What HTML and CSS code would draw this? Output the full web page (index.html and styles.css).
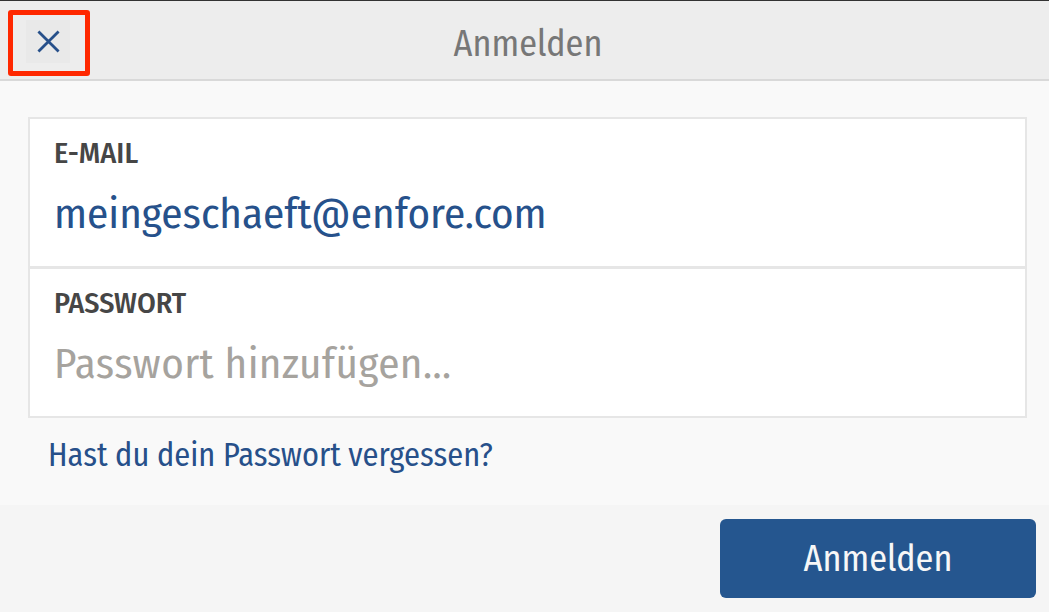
FILE: index.html
```html
<!DOCTYPE html>
<html lang="de">
<head>
<meta charset="utf-8">
<title>Anmelden</title>
<link rel="stylesheet" href="styles.css">
</head>
<body>
<div class="app">
  <header class="topbar">
    <button class="close" aria-label="Schließen">
      <svg class="close-icon" viewBox="0 0 24 24" width="24" height="24" aria-hidden="true">
        <path d="M1.5 1.5 L22.5 22.5 M22.5 1.5 L1.5 22.5" />
      </svg>
    </button>
    <h1 class="title">Anmelden</h1>
    <span class="spacer"></span>
  </header>
  <div class="highlight"></div>
  <main class="content">
    <div class="field">
      <div class="label">E-MAIL</div>
      <div class="value">meingeschaeft@enfore.com</div>
    </div>
    <div class="field field-second">
      <div class="label">PASSWORT</div>
      <div class="value placeholder">Passwort hinzufügen...</div>
    </div>
    <a class="forgot" href="#">Hast du dein Passwort vergessen?</a>
  </main>
  <footer class="actions">
    <button class="primary">Anmelden</button>
  </footer>
</div>
</body>
</html>
```
FILE: styles.css
```css
* { box-sizing: border-box; }
html, body { margin: 0; padding: 0; }
body {
  font-family: "Fira Sans Condensed", "Fira Sans", "Roboto Condensed", sans-serif;
  background: #f9f9f9;
  width: 1049px;
  height: 612px;
  overflow: hidden;
}
.app {
  position: relative;
  display: flex;
  flex-direction: column;
  height: 612px;
}
.topbar {
  display: flex;
  align-items: flex-start;
  height: 81px;
  background: #ededed;
  border-top: 1px solid #333333;
  border-bottom: 2px solid #d9d9d9;
  flex: none;
}
.close {
  margin: 19px 0 0 26px;
  width: 44px;
  height: 43px;
  border: none;
  padding: 0;
  background: #e9e9e9;
  display: flex;
  align-items: center;
  justify-content: center;
  flex: none;
}
.close-icon path {
  fill: none;
  stroke: #27508a;
  stroke-width: 2.9;
}
.close-icon { width: 23px; height: 23px; }
.title {
  flex: 1;
  margin: 0;
  padding-top: 8px;
  line-height: 70px;
  font-size: 36px;
  font-weight: 400;
  color: #777777;
  text-align: center;
}
.spacer { width: 63px; flex: none; }
.highlight {
  position: absolute;
  left: 8px;
  top: 10px;
  width: 82px;
  height: 66px;
  border: 5px solid #ff2800;
  border-radius: 3px;
}
.content {
  flex: 1;
  display: flex;
  flex-direction: column;
  padding: 36px 22px 0 28px;
  background: #f9f9f9;
}
.field {
  background: #ffffff;
  border: 2px solid #e6e6e6;
  padding: 16px 24px 26px 24px;
}
.field-second { margin-top: -1px; }
.label {
  font-size: 30px;
  line-height: 36px;
  font-weight: 500;
  color: #464646;
}
.value {
  margin-top: 17px;
  font-size: 43px;
  line-height: 52px;
  color: #26518b;
  white-space: nowrap;
}
.placeholder {
  color: #a6a39e;
  letter-spacing: 0.4px;
}
.forgot {
  align-self: flex-start;
  margin: 18px 0 0 20px;
  font-size: 32.3px;
  line-height: 40px;
  color: #27508a;
  text-decoration: none;
}
.actions {
  flex: none;
  height: 107px;
  background: #f5f5f5;
  display: flex;
  justify-content: flex-end;
  align-items: flex-start;
  padding: 14px 13px 0 0;
}
.primary {
  width: 316px;
  height: 79px;
  border: none;
  border-radius: 6px;
  background: #25568f;
  color: #f7f7f7;
  font-family: inherit;
  font-size: 36px;
  padding: 0;
}
```
